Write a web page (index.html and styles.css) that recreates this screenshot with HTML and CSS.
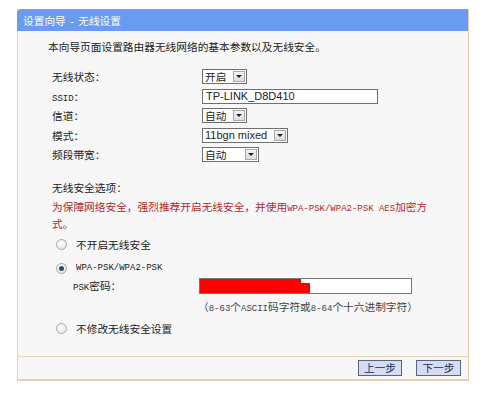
FILE: index.html
```html
<!DOCTYPE html>
<html lang="zh-CN">
<head>
<meta charset="utf-8">
<title>设置向导 - 无线设置</title>
<link rel="stylesheet" href="styles.css">
</head>
<body>
<div class="panel">
  <div class="title">设置向导 - 无线设置</div>
  <div class="content">
    <p class="intro">本向导页面设置路由器无线网络的基本参数以及无线安全。</p>

    <div class="form">
      <div class="row">
        <span class="label">无线状态：</span>
        <span class="sel w-on"><span class="sel-text">开启</span><span class="arrow"></span></span>
      </div>
      <div class="row">
        <span class="label"><span class="en">SSID</span>：</span>
        <span class="text-input">TP-LINK_D8D410</span>
      </div>
      <div class="row">
        <span class="label">信道：</span>
        <span class="sel w-auto"><span class="sel-text">自动</span><span class="arrow"></span></span>
      </div>
      <div class="row">
        <span class="label">模式：</span>
        <span class="sel w-mode"><span class="sel-text latin">11bgn mixed</span><span class="arrow"></span></span>
      </div>
      <div class="row">
        <span class="label">频段带宽：</span>
        <span class="sel w-band"><span class="sel-text">自动</span><span class="arrow"></span></span>
      </div>
    </div>

    <p class="sec-title">无线安全选项：</p>
    <p class="warn">为保障网络安全，强烈推荐开启无线安全，并使用<span class="en">WPA-PSK/WPA2-PSK&nbsp;AES</span>加密方式。</p>

    <div class="opt first"><span class="radio"></span><span>不开启无线安全</span></div>
    <div class="opt"><span class="radio checked"></span><span class="en">WPA-PSK/WPA2-PSK</span></div>
    <div class="psk">
      <span class="psk-label"><span class="en">PSK</span>密码：</span>
      <span class="psk-input"><span class="mask-a"></span><span class="mask-b"></span></span>
    </div>
    <div class="hint">（<span class="en">8-63</span>个<span class="en">ASCII</span>码字符或<span class="en">8-64</span>个十六进制字符）</div>
    <div class="opt last"><span class="radio"></span><span>不修改无线安全设置</span></div>
  </div>
  <div class="footer">
    <button class="btn">上一步</button>
    <button class="btn">下一步</button>
  </div>
</div>
</body>
</html>
```

FILE: styles.css
```css
body{
  margin:0;
  background:#fff;
  font-family:"Noto Sans CJK SC","Liberation Sans",sans-serif;
  font-size:10.7px;
  color:#222;
}
p{margin:0;}
.en{font-family:"Liberation Mono","Noto Sans CJK SC",monospace;font-size:9px;line-height:1;}
.latin{font-family:"Liberation Sans",sans-serif;font-size:11px;}

.panel{
  margin:10px 0 0 17px;
  width:450px;
  border-left:1px solid #d4d4d4;
  border-right:1px solid #e0cda9;
  border-bottom:2px solid #e3d3b4;
  background:#f7f7f7;
}
.title{
  height:21px;
  line-height:21px;
  padding-left:6px;
  background:#6a9bf0;
  border-top:1px solid #8a9ec4;
  border-radius:4px 0 0 0;
  color:#fff;
  word-spacing:2px;
  margin:-1px 0 0 -1px;
}
.content{padding:0 0 17px 30px;}
.intro{margin-top:7px;line-height:18px;}

.form{margin:11px 0 0 4px;}
.row{display:flex;align-items:center;height:19.5px;}
.label{width:150px;flex:none;}

.sel{
  display:inline-flex;
  align-items:center;
  height:15px;
  box-sizing:border-box;
  border:1px solid #6f6f6f;
  background:#fff;
}
.sel-text{padding-left:2px;line-height:13px;}
.arrow{
  margin-left:auto;
  margin-right:1px;
  width:12px;
  height:11px;
  box-sizing:border-box;
  border:1px solid #a8a8a8;
  background:linear-gradient(#f4f4f4,#dcdcdc);
  display:flex;
  align-items:center;
  justify-content:center;
}
.arrow::after{
  content:"";
  border-left:3px solid transparent;
  border-right:3px solid transparent;
  border-top:3px solid #222;
}
.w-on{width:45px;}
.w-auto{width:45px;}
.w-mode{width:86px;}
.w-band{width:57px;}

.text-input{
  width:176px;
  height:15px;
  box-sizing:border-box;
  border:1px solid #6f6f6f;
  background:#fff;
  padding-left:3px;
  font-family:"Liberation Sans",sans-serif;
  font-size:11px;
  line-height:13px;
}

.sec-title{margin:14px 0 0 4px;line-height:18px;}
.warn{margin:1px 0 0 4px;width:382px;line-height:17px;color:#b02a2a;}

.opt{display:flex;align-items:center;height:22px;padding-left:8px;}
.opt.first{margin-top:2px;}
.opt.last{height:20px;margin-top:4px;}
.radio{
  width:11px;
  height:11px;
  box-sizing:border-box;
  border:1px solid #a9a9a9;
  border-radius:50%;
  background:radial-gradient(circle at 40% 35%,#fff,#dedede);
  margin-right:9px;
  display:flex;
  align-items:center;
  justify-content:center;
}
.radio.checked::after{
  content:"";
  width:5px;
  height:5px;
  border-radius:50%;
  background:#2c4a78;
}
.opt + .opt{margin-top:2px;}

.psk{display:flex;align-items:center;height:16px;margin-top:-2px;}
.psk-label{width:126px;margin-left:25px;flex:none;}
.psk-input{
  position:relative;
  width:213px;
  height:16px;
  box-sizing:border-box;
  border:1px solid #777;
  background:#fff;
}
.mask-a{position:absolute;left:0;top:0;width:101px;height:14px;background:#f00;}
.mask-b{position:absolute;left:0;top:4px;width:110px;height:10px;background:#f00;}

.hint{margin:5px 0 0 150px;line-height:16px;color:#444;}

.footer{
  border-top:1px solid #e6d6b8;
  height:22px;
  display:flex;
  justify-content:flex-end;
  align-items:flex-start;
  gap:14px;
  padding-right:7px;
}
.btn{
  margin:3px 0 0;
  height:16px;
  padding:0;
  font:inherit;
  line-height:14px;
  color:#1c2a55;
  background:#d6dcf6;
  border:1px solid #56667f;
}
.btn:first-child{width:44px;}
.btn:last-child{width:45px;}
```
